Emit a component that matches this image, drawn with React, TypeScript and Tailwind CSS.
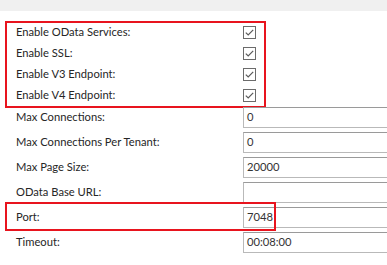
import React from "react";

const font = { fontFamily: 'Lato, "Noto Sans", sans-serif' };

function CheckBox() {
  return (
    <svg width="13" height="13" viewBox="0 0 13 13" className="block">
      <rect x="0.5" y="0.5" width="12" height="12" fill="#ffffff" stroke="#6b6b6b" />
      <path d="M2.8 6.6 L5.2 9 L10.2 3.8" fill="none" stroke="#5a5a5a" strokeWidth="1.2" />
    </svg>
  );
}

const checks = ["Enable OData Services:", "Enable SSL:", "Enable V3 Endpoint:", "Enable V4 Endpoint:"];

const fields = [
  { label: "Max Connections:", value: "0" },
  { label: "Max Connections Per Tenant:", value: "0" },
  { label: "Max Page Size:", value: "20000" },
  { label: "OData Base URL:", value: "" },
  { label: "Port:", value: "7048", mark: true },
  { label: "Timeout:", value: "00:08:00" },
];

export default function App() {
  return (
    <div className="w-[387px] h-[265px] overflow-hidden bg-white text-[11.2px] text-[#262626]" style={font}>
      <div className="h-[11px] bg-[#f0f0f0]" />
      <div className="relative mt-[11px]">
        {checks.map((c) => (
          <div key={c} className="flex h-[21px] items-center pl-[16px]">
            <div className="w-[227px] shrink-0">{c}</div>
            <CheckBox />
          </div>
        ))}
        <div className="pointer-events-none absolute left-[5px] top-[-1px] h-[87px] w-[261px] border-[2px] border-[#e8141e]" />
      </div>
      <div className="mt-[1px] flex flex-col gap-[4px]">
        {fields.map((f) => (
          <div key={f.label} className="relative flex h-[21px] items-center pl-[16px]">
            <div className="w-[227px] shrink-0">{f.label}</div>
            <div className="flex h-[21px] w-[160px] shrink-0 items-center border border-r-0 border-[#b9b9b9] border-t-[#9a9a9a] pl-[3px] text-[#333]">
              {f.value}
            </div>
            {f.mark && (
              <div className="pointer-events-none absolute left-[5px] top-[-5px] h-[29px] w-[271px] border-[2px] border-[#e8141e]" />
            )}
          </div>
        ))}
      </div>
    </div>
  );
}
